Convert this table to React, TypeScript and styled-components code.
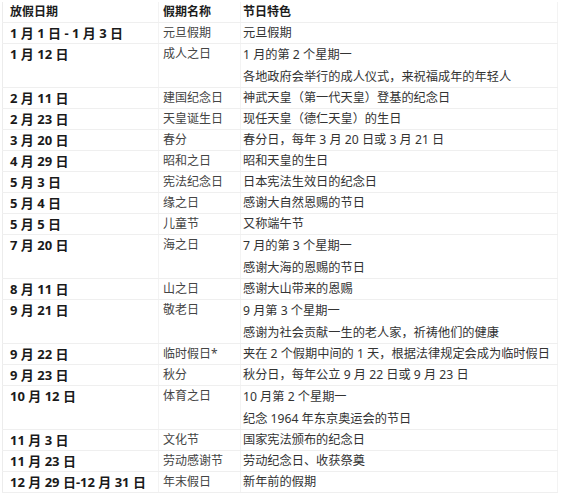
import React from "react";
import styled, { createGlobalStyle } from "styled-components";

interface IHoliday {
    date: string;
    name: string;
    desc: string[];
};

const holidays: IHoliday[] = [
    { date: "1 月 1 日 - 1 月 3 日", name: "元旦假期", desc: ["元旦假期"] },
    { date: "1 月 12 日", name: "成人之日", desc: ["1 月的第 2 个星期一", "各地政府会举行的成人仪式，来祝福成年的年轻人"] },
    { date: "2 月 11 日", name: "建国纪念日", desc: ["神武天皇（第一代天皇）登基的纪念日"] },
    { date: "2 月 23 日", name: "天皇诞生日", desc: ["现任天皇（德仁天皇）的生日"] },
    { date: "3 月 20 日", name: "春分", desc: ["春分日，每年 3 月 20 日或 3 月 21 日"] },
    { date: "4 月 29 日", name: "昭和之日", desc: ["昭和天皇的生日"] },
    { date: "5 月 3 日", name: "宪法纪念日", desc: ["日本宪法生效日的纪念日"] },
    { date: "5 月 4 日", name: "缘之日", desc: ["感谢大自然恩赐的节日"] },
    { date: "5 月 5 日", name: "儿童节", desc: ["又称端午节"] },
    { date: "7 月 20 日", name: "海之日", desc: ["7 月的第 3 个星期一", "感谢大海的恩赐的节日"] },
    { date: "8 月 11 日", name: "山之日", desc: ["感谢大山带来的恩赐"] },
    { date: "9 月 21 日", name: "敬老日", desc: ["9 月第 3 个星期一", "感谢为社会贡献一生的老人家，祈祷他们的健康"] },
    { date: "9 月 22 日", name: "临时假日*", desc: ["夹在 2 个假期中间的 1 天，根据法律规定会成为临时假日"] },
    { date: "9 月 23 日", name: "秋分", desc: ["秋分日，每年公立 9 月 22 日或 9 月 23 日"] },
    { date: "10 月 12 日", name: "体育之日", desc: ["10 月第 2 个星期一", "纪念 1964 年东京奥运会的节日"] },
    { date: "11 月 3 日", name: "文化节", desc: ["国家宪法颁布的纪念日"] },
    { date: "11 月 23 日", name: "劳动感谢节", desc: ["劳动纪念日、收获祭奠"] },
    { date: "12 月 29 日-12 月 31 日", name: "年末假日", desc: ["新年前的假期"] },
];

const App = () => {
    return (
        <>
            <GlobalStyle />
            <Page>
                <Table>
                    <colgroup>
                        <col style={{ width: 156 }} />
                        <col style={{ width: 82 }} />
                        <col />
                    </colgroup>
                    <thead>
                        <tr>
                            <HeadCell $pad={7}>放假日期</HeadCell>
                            <HeadCell $pad={4}>假期名称</HeadCell>
                            <HeadCell $pad={2}>节日特色</HeadCell>
                        </tr>
                    </thead>
                    <tbody>
                        {holidays.map((h) => (
                            <tr key={h.date}>
                                <DateCell>{h.date}</DateCell>
                                <NameCell>{h.name}</NameCell>
                                <DescCell>
                                    {h.desc.map((line) => (
                                        <DescLine key={line} $double={h.desc.length > 1}>{line}</DescLine>
                                    ))}
                                </DescCell>
                            </tr>
                        ))}
                    </tbody>
                </Table>
            </Page>
        </>
    );
};

export default App;

const GlobalStyle = createGlobalStyle`
    body {
        margin: 0;
        background: #ffffff;
        font-family: "Noto Sans", "Noto Sans CJK SC", sans-serif;
    }
`;

const Page = styled.div`
    width: 562px;
    height: 500px;
    padding: 2px 0 0 2px;
    box-sizing: border-box;
    background: #ffffff;
`;

const Table = styled.table`
    width: 556px;
    border-collapse: collapse;
    table-layout: fixed;
    border-left: 1px solid #ececec;
    border-right: 1px solid #ececec;
`;

const Cell = styled.td`
    padding: 0;
    vertical-align: top;
    line-height: 20px;
    border-bottom: 1px solid #efefef;
    border-right: 1px solid #f3f3f3;
    white-space: nowrap;
`;

const HeadCell = styled.th<{ $pad: number }>`
    padding: 0 0 0 ${(p) => p.$pad}px;
    text-align: left;
    vertical-align: top;
    line-height: 20px;
    font-size: 12px;
    font-weight: 700;
    color: #1c1c1c;
    border-bottom: 1px solid #efefef;
    border-right: 1px solid #f3f3f3;
`;

const DateCell = styled(Cell)`
    padding-left: 7px;
    font-size: 13px;
    font-weight: 700;
    color: #1a1a1a;
`;

const NameCell = styled(Cell)`
    padding-left: 4px;
    font-size: 12px;
    color: #444444;
`;

const DescCell = styled(Cell)`
    padding-left: 2px;
    font-size: 12.2px;
    color: #333333;
`;

const DescLine = styled.div<{ $double: boolean }>`
    line-height: ${(p) => (p.$double ? "21.5px" : "20px")};
`;
